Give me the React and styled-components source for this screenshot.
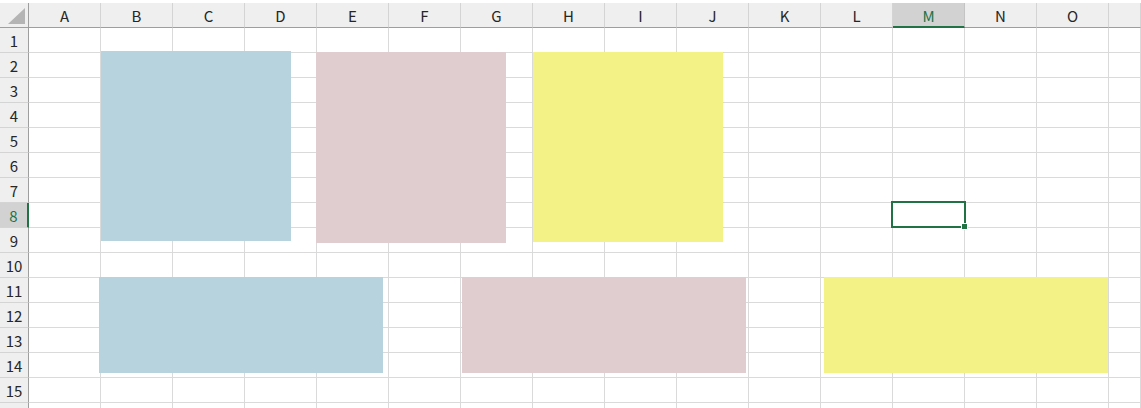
import React from 'react';
import styled, { createGlobalStyle } from 'styled-components';

const COLUMNS = ['A', 'B', 'C', 'D', 'E', 'F', 'G', 'H', 'I', 'J', 'K', 'L', 'M', 'N', 'O'];
const ROW_COUNT = 16;
const LABELED_ROWS = 15; // row 16 is only a sliver at the bottom edge
const ACTIVE_COL = 'M';
const ACTIVE_ROW = 8;

const SHAPES = [
  { x: 101, y: 51, w: 190, h: 190, color: '#b7d4de' },
  { x: 316, y: 52, w: 190, h: 191, color: '#e0cdd0' },
  { x: 533, y: 52, w: 190, h: 190, color: '#f2f286' },
  { x: 99, y: 277, w: 284, h: 96, color: '#b7d4de' },
  { x: 462, y: 277, w: 284, h: 96, color: '#e0cdd0' },
  { x: 824, y: 277, w: 284, h: 96, color: '#f2f286' },
];

const GlobalStyle = createGlobalStyle`
  html, body {
    margin: 0;
    padding: 0;
    background: #ffffff;
    overflow: hidden;
  }
  body {
    font-family: "Noto Sans CJK JP", "Liberation Sans", sans-serif;
  }
`;

const Sheet = styled.div`
  position: relative;
  width: 1141px;
  height: 408px;
  padding-top: 3px;
  box-sizing: border-box;
  overflow: hidden;
  background: #ffffff;
`;

const Grid = styled.div`
  display: grid;
  grid-template-columns: 29px repeat(15, 72px) 1fr;
  grid-auto-rows: 25px;
`;

const Corner = styled.div`
  position: relative;
  background: #efefef;
  border-right: 1px solid #9e9e9e;
  border-bottom: 1px solid #9e9e9e;
  box-sizing: border-box;

  &::after {
    content: '';
    position: absolute;
    right: 3px;
    bottom: 3px;
    width: 0;
    height: 0;
    border-left: 17px solid transparent;
    border-bottom: 16px solid #b4b4b4;
  }
`;

const ColHeader = styled.div`
  display: flex;
  align-items: center;
  justify-content: center;
  box-sizing: border-box;
  background: ${({ $active }) => ($active ? '#d2d2d2' : '#efefef')};
  border-right: 1px solid ${({ $active }) => ($active ? '#c4c4c4' : '#d4d4d4')};
  border-bottom: ${({ $active }) => ($active ? '2px solid #217346' : '1px solid #9e9e9e')};
  color: ${({ $active }) => ($active ? '#217346' : '#262626')};
  font-size: 15px;
  padding-top: ${({ $active }) => ($active ? '1px' : '0')};
`;

const RowHeader = styled.div`
  display: flex;
  align-items: center;
  justify-content: center;
  box-sizing: border-box;
  background: ${({ $active }) => ($active ? '#d2d2d2' : '#efefef')};
  border-right: ${({ $active }) => ($active ? '2px solid #217346' : '1px solid #9e9e9e')};
  border-bottom: 1px solid #d4d4d4;
  color: ${({ $active }) => ($active ? '#217346' : '#262626')};
  font-size: 15px;
`;

const Cell = styled.div`
  box-sizing: border-box;
  border-right: 1px solid #dadada;
  border-bottom: 1px solid #dadada;
  background: #ffffff;
`;

const Shape = styled.div`
  position: absolute;
  left: ${({ $x }) => $x}px;
  top: ${({ $y }) => $y}px;
  width: ${({ $w }) => $w}px;
  height: ${({ $h }) => $h}px;
  background: ${({ $color }) => $color};
`;

const Selection = styled.div`
  position: absolute;
  left: 891px;
  top: 201px;
  width: 75px;
  height: 27px;
  box-sizing: border-box;
  border: 2px solid #217346;
  pointer-events: none;
`;

const FillHandle = styled.div`
  position: absolute;
  right: -4px;
  bottom: -4px;
  width: 5px;
  height: 5px;
  background: #217346;
  border: 1px solid #ffffff;
`;

const App = () => {
  const rows = Array.from({ length: ROW_COUNT }, (_, i) => i + 1);

  return (
    <>
      <GlobalStyle />
      <Sheet>
        <Grid>
          <Corner />
          {COLUMNS.map((c) => (
            <ColHeader key={c} $active={c === ACTIVE_COL}>{c}</ColHeader>
          ))}
          <ColHeader />
          {rows.map((r) => (
            <React.Fragment key={r}>
              <RowHeader $active={r === ACTIVE_ROW}>{r <= LABELED_ROWS ? r : ''}</RowHeader>
              {COLUMNS.map((c) => (
                <Cell key={c} />
              ))}
              <Cell />
            </React.Fragment>
          ))}
        </Grid>
        {SHAPES.map((s, i) => (
          <Shape key={i} $x={s.x} $y={s.y} $w={s.w} $h={s.h} $color={s.color} />
        ))}
        <Selection>
          <FillHandle />
        </Selection>
      </Sheet>
    </>
  );
};

export default App;
